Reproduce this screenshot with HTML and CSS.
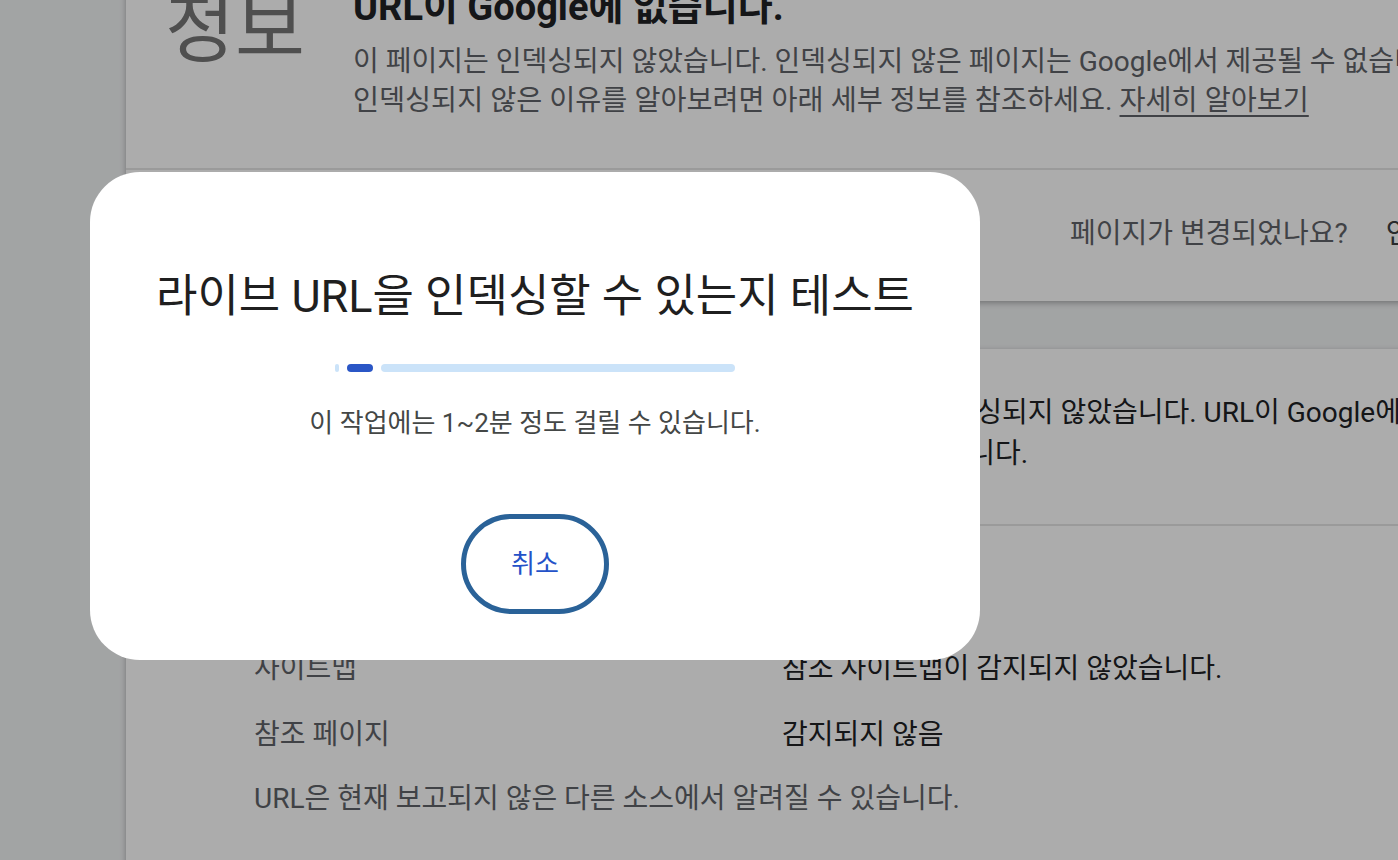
FILE: index.html
```html
<!doctype html>
<html lang="ko">
<head>
    <meta charset="UTF-8">
    <meta name="viewport" content="width=device-width, initial-scale=1.0">
    <title>URL 검사</title>
    <link rel="stylesheet" href="styles.css">
</head>
<body>
    <!-- Inspection result -->
    <div class="page">
        <div class="card summary">
            <div class="summary-head">
                <div class="verdict-label">정보</div>
                <div class="verdict">
                    <h1>URL이 Google에 없습니다.</h1>
                    <p class="line">이 페이지는 인덱싱되지 않았습니다. 인덱싱되지 않은 페이지는 Google에서 제공될 수 없습니다.</p>
                    <p class="line">인덱싱되지 않은 이유를 알아보려면 아래 세부 정보를 참조하세요. <a href="#">자세히 알아보기</a></p>
                </div>
            </div>
            <div class="summary-actions">
                <span>페이지가 변경되었나요?</span>
                <button class="text-btn">인덱스 생성 요청</button>
            </div>
        </div>

        <div class="card details">
            <div class="detail-row intro">
                <div class="label">페이지 색인 생성</div>
                <div class="value">
                    <p class="line">이 페이지는 인덱싱되지 않았습니다. URL이 Google에서 검색되거나 크롤링된 적이 없어 아직</p>
                    <p class="line">알려지지 않았습니다.</p>
                </div>
            </div>
            <div class="detail-list">
                <div class="detail-row">
                    <div class="label heading">검색</div>
                </div>
                <div class="detail-row">
                    <div class="label">사이트맵</div>
                    <div class="value">참조 사이트맵이 감지되지 않았습니다.</div>
                </div>
                <div class="detail-row">
                    <div class="label">참조 페이지</div>
                    <div class="value">감지되지 않음</div>
                </div>
                <div class="note">URL은 현재 보고되지 않은 다른 소스에서 알려질 수 있습니다.</div>
            </div>
        </div>
    </div>

    <!-- Live test dialog -->
    <div class="scrim">
        <div class="dialog">
            <h2>라이브 URL을 인덱싱할 수 있는지 테스트</h2>
            <div class="progress">
                <div class="track-start"></div>
                <div class="indicator"></div>
                <div class="track-end"></div>
            </div>
            <p class="dialog-text">이 작업에는 1~2분 정도 걸릴 수 있습니다.</p>
            <button class="outline-btn">취소</button>
        </div>
    </div>
</body>
</html>
```

FILE: styles.css
```css
body {
    margin: 0;
    font-family: Roboto, "Noto Sans CJK KR", sans-serif;
    background-color: #f1f3f4;
    color: #202124;
    width: 1398px;
    height: 860px;
    overflow: hidden;
}
.page {
    display: flex;
    flex-direction: column;
    gap: 48px;
    width: 1900px;
    margin-top: -16px;
    padding-left: 126px;
}
.card {
    background: #fff;
    box-shadow: 0 2px 6px rgba(0, 0, 0, 0.3);
}
.line {
    margin: 0;
    white-space: nowrap;
}

/* summary card */
.summary-head {
    display: flex;
    padding: 0 0 48px 39px;
    border-bottom: 2px solid #e4e4e4;
}
.verdict-label {
    width: 188px;
    font-size: 76px;
    line-height: 72px;
    color: #757575;
    margin-top: 10px;
}
.verdict h1 {
    margin: 1px 0 13px;
    font-size: 38px;
    line-height: 44px;
    font-weight: 700;
    color: #202124;
}
.verdict .line {
    font-size: 28px;
    line-height: 39px;
    color: #5f6368;
}
.verdict .line + .line {
    font-size: 28.3px;
}
.verdict a {
    color: #5f6368;
    text-underline-offset: 5px;
}
.summary-actions {
    display: flex;
    align-items: center;
    gap: 38px;
    padding: 44px 0 47px 944px;
    font-size: 28px;
    line-height: 40px;
    color: #5f6368;
}
.text-btn {
    border: none;
    background: none;
    padding: 0;
    font: inherit;
    color: #3c4043;
}

/* details card */
.details {
    padding: 43px 0 80px 128px;
    font-size: 28px;
}
.detail-row {
    display: grid;
    grid-template-columns: 528px 1fr;
    line-height: 40px;
}
.detail-row.intro {
    line-height: 41px;
    padding-bottom: 50px;
    border-bottom: 2px solid #e4e4e4;
}
.label {
    color: #5f6368;
}
.label.heading {
    color: #202124;
    font-weight: 500;
}
.value {
    color: #202124;
}
.detail-list {
    display: flex;
    flex-direction: column;
    gap: 26px;
    padding-top: 57px;
}
.note {
    line-height: 40px;
    color: #5f6368;
    margin-top: -2px;
}

/* dialog */
.scrim {
    position: fixed;
    inset: 0;
    background: rgba(0, 0, 0, 0.325);
}
.dialog {
    position: absolute;
    left: 90px;
    top: 172px;
    width: 890px;
    box-sizing: border-box;
    padding: 97px 0 46px;
    background: #fff;
    border-radius: 50px;
    display: flex;
    flex-direction: column;
    align-items: center;
}
.dialog h2 {
    margin: 0;
    font-size: 45px;
    line-height: 56px;
    font-weight: 400;
    color: #1f1f1f;
    white-space: nowrap;
}
.progress {
    display: flex;
    gap: 8px;
    width: 400px;
    height: 8px;
    margin-top: 39px;
}
.progress div {
    border-radius: 4px;
}
.track-start {
    width: 4px;
    background: #cbe3f9;
}
.indicator {
    width: 26px;
    background: #2a56c6;
}
.track-end {
    flex: 1;
    background: #cbe3f9;
}
.dialog-text {
    margin: 33px 0 0;
    font-size: 26px;
    line-height: 36px;
    color: #444746;
}
.outline-btn {
    margin-top: 73px;
    width: 148px;
    height: 100px;
    padding: 0 0 6px;
    border: 5px solid #2a6298;
    border-radius: 50px;
    background: #fff;
    font-family: inherit;
    font-size: 26px;
    color: #2452c8;
    cursor: pointer;
}
```
